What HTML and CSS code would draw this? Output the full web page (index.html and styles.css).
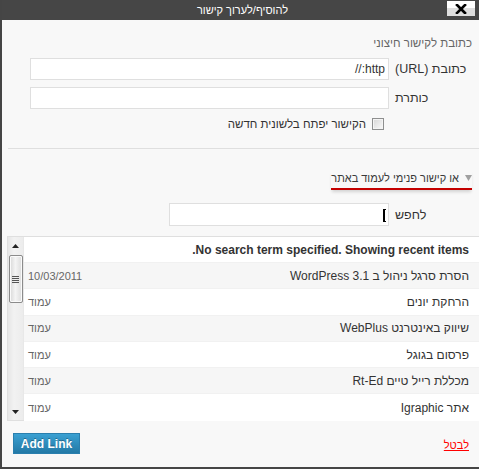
FILE: index.html
```html
<!DOCTYPE html>
<html lang="he">
<head>
<meta charset="utf-8">
<title>להוסיף/לערוך קישור</title>
<link rel="stylesheet" href="styles.css">
</head>
<body>
<div class="dialog" dir="rtl">
  <div class="titlebar">
    <span class="title">להוסיף/לערוך קישור</span>
    <button class="close" type="button" aria-label="close">
      <svg width="12" height="10" viewBox="0 0 12 10"><path d="M2 1 L10 9 M10 1 L2 9" stroke="#000" stroke-width="2.6" stroke-linecap="square"/></svg>
    </button>
  </div>
  <div class="content">
    <section class="external">
      <p class="section-head">כתובת לקישור חיצוני</p>
      <div class="field">
        <label class="field-label">כתובת (URL)</label>
        <input class="text-input" type="text" value="http://">
      </div>
      <div class="field">
        <label class="field-label">כותרת</label>
        <input class="text-input" type="text" value="">
      </div>
      <div class="check-row">
        <span class="checkbox"></span>
        <span class="check-label">הקישור יפתח בלשונית חדשה</span>
      </div>
    </section>

    <section class="internal">
      <p class="toggle"><svg class="arrow" width="7" height="6" viewBox="0 0 7 6"><polygon points="0,0 7,0 3.5,6" fill="#a0a0a0"/></svg><span class="toggle-text">או קישור פנימי לעמוד באתר</span></p>
      <div class="search-row">
        <label class="field-label">לחפש</label>
        <span class="search-wrap"><input class="search-input" type="text" value=""><span class="caret"></span></span>
      </div>
      <div class="results">
        <ul class="list">
          <li class="row head"><span class="item-title">No search term specified. Showing recent items.</span></li>
          <li class="row alt"><span class="item-title">הסרת סרגל ניהול ב WordPress 3.1</span><span class="item-info">10/03/2011</span></li>
          <li class="row"><span class="item-title">הרחקת יונים</span><span class="item-info">עמוד</span></li>
          <li class="row alt"><span class="item-title">שיווק באינטרנט WebPlus</span><span class="item-info">עמוד</span></li>
          <li class="row"><span class="item-title">פרסום בגוגל</span><span class="item-info">עמוד</span></li>
          <li class="row alt"><span class="item-title">מכללת רייל טיים Rt-Ed</span><span class="item-info">עמוד</span></li>
          <li class="row last"><span class="item-title">אתר Igraphic</span><span class="item-info">עמוד</span></li>
        </ul>
        <div class="scrollbar">
          <span class="sb-btn"><svg width="7" height="4" viewBox="0 0 7 4"><polygon points="0,4 7,4 3.5,0" fill="#222"/></svg></span>
          <span class="sb-thumb"><span class="grip"></span><span class="grip"></span><span class="grip"></span><span class="grip"></span></span>
          <span class="sb-track"></span>
          <span class="sb-btn"><svg width="7" height="4" viewBox="0 0 7 4"><polygon points="0,0 7,0 3.5,4" fill="#222"/></svg></span>
        </div>
      </div>
    </section>

    <div class="footer">
      <a class="cancel" href="#">לבטל</a>
      <button class="add-link" type="button">Add Link</button>
    </div>
  </div>
</div>
</body>
</html>
```

FILE: styles.css
```css
* {
  box-sizing: border-box;
}

html, body {
  margin: 0;
  padding: 0;
}

body {
  width: 479px;
  height: 469px;
  overflow: hidden;
  background: #454545;
  font-family: "Liberation Sans", Arial, "DejaVu Sans", sans-serif;
  color: #333;
}

.dialog {
  margin-left: 2px;
  width: 477px;
  height: 467px;
  background: #f8f8f8;
  overflow: hidden;
  display: flex;
  flex-direction: column;
}

/* title bar */
.titlebar {
  position: relative;
  height: 20px;
  flex: 0 0 20px;
  background: #464646;
  display: flex;
  align-items: center;
  justify-content: center;
}

.title {
  color: #fff;
  font-size: 11px;
  line-height: 14px;
  padding-left: 4px;
}

.close {
  position: absolute;
  top: 1px;
  right: 4px;
  width: 28px;
  height: 15px;
  padding: 0;
  border: 0;
  background: linear-gradient(#fff 0, #fff 50%, #dedede 50%, #dedede 100%);
  display: flex;
  align-items: center;
  justify-content: center;
}

.close svg {
  display: block;
}

/* content */
.content {
  flex: 1;
  padding: 0 7px 0 6px;
  display: flex;
  flex-direction: column;
}

.external {
  margin-right: -7px;
  padding-right: 7px;
  padding-bottom: 18px;
  border-bottom: 1px solid #dfdfdf;
}

.section-head {
  margin: 15px 0 0;
  font-size: 11.5px;
  line-height: 16px;
  color: #666;
}

.field {
  display: flex;
  align-items: center;
  margin-top: 7px;
}

.field-label {
  flex: 0 0 83px;
  padding-left: 6px;
  text-align: left;
  font-size: 12.5px;
  color: #333;
}

.text-input {
  width: 359px;
  height: 22px;
  margin: 0;
  padding: 0 3px;
  border: 1px solid #dfdfdf;
  background: #fff;
  font-family: "Liberation Sans", Arial, sans-serif;
  font-size: 12px;
  color: #333;
  outline: none;
}

.check-row {
  display: flex;
  align-items: center;
  margin-top: 8px;
  padding-right: 88px;
  height: 13px;
}

.checkbox {
  width: 12px;
  height: 12px;
  flex: 0 0 12px;
  border: 1px solid #8e8f8f;
  background: linear-gradient(135deg, #d6d6d6, #fafafa);
  box-shadow: inset 0 0 0 1px #f4f4f4;
}

.check-label {
  margin-right: 6px;
  font-size: 11.5px;
  color: #333;
}

/* internal links */
.internal {
  display: flex;
  flex-direction: column;
}

.toggle {
  margin: 21px 0 0;
  align-self: flex-start;
  display: flex;
  align-items: center;
  font-size: 11px;
  line-height: 16px;
  color: #3a3a3a;
  padding-bottom: 2px;
  border-bottom: 2px solid #c40000;
  box-shadow: 0 3px 3px -1px rgba(0, 0, 0, 0.15);
}

.arrow {
  display: block;
  margin-left: 6px;
}

.search-row {
  display: flex;
  align-items: center;
  margin-top: 13px;
}

.search-wrap {
  position: relative;
  display: block;
  width: 220px;
  height: 23px;
}

.search-input {
  display: block;
  width: 220px;
  height: 23px;
  margin: 0;
  border: 1px solid #dfdfdf;
  background: #fff;
  outline: none;
}

.caret {
  position: absolute;
  top: 6px;
  right: 3px;
  width: 3px;
  height: 13px;
  border-left: 2px solid #000;
  border-top: 1px solid #000;
  border-bottom: 1px solid #000;
}

.results {
  margin-top: 10px;
  margin-left: -1px;
  margin-right: -8px;
  height: 185px;
  border: 1px solid #dfdfdf;
  background: #fff;
  display: flex;
}

.list {
  flex: 1;
  margin: 0;
  padding: 0;
  list-style: none;
}

.row {
  display: flex;
  align-items: center;
  justify-content: space-between;
  height: 26.3px;
  padding: 0 10px 0 4px;
  border-bottom: 1px solid #f1f1f1;
  font-size: 12px;
  color: #333;
  background: #fff;
}

.row.head {
  height: 26px;
  font-weight: bold;
  font-size: 12px;
}

.row.alt {
  background: #f6f6f6;
}

.row.last {
  border-bottom: 0;
}

.item-info {
  font-size: 11px;
  color: #666;
}

.scrollbar {
  flex: 0 0 16px;
  width: 16px;
  display: flex;
  flex-direction: column;
  align-items: center;
  background: linear-gradient(90deg, #e6e6e6, #f2f2f2 40%, #ececec);
  border-right: 1px solid #e8e8e8;
}

.sb-btn {
  height: 17px;
  flex: 0 0 17px;
  display: flex;
  align-items: center;
  justify-content: center;
}

.sb-thumb {
  margin-top: 1px;
  width: 14px;
  height: 48px;
  flex: 0 0 48px;
  border: 1px solid #8b8b8b;
  border-radius: 2px;
  background: linear-gradient(90deg, #d8d8d8, #f4f4f4 45%, #dcdcdc);
  box-shadow: inset 0 0 0 1px #fafafa;
  display: flex;
  flex-direction: column;
  align-items: center;
  justify-content: center;
  gap: 1px;
}

.grip {
  display: block;
  width: 7px;
  height: 1px;
  background: #555;
}

.sb-track {
  flex: 1;
}

/* footer */
.footer {
  margin-top: 12px;
  display: flex;
  align-items: center;
  justify-content: space-between;
}

.cancel {
  margin-right: 3px;
  font-size: 11px;
  color: #ff0000;
  text-decoration: underline;
  padding-top: 2px;
}

.add-link {
  margin-left: 5px;
  width: 67px;
  height: 21px;
  padding: 0;
  border: 1px solid #2a7fae;
  background: linear-gradient(#3aa0d2, #2379a6);
  color: #fff;
  font-family: "Liberation Sans", Arial, sans-serif;
  font-weight: bold;
  font-size: 12px;
  text-shadow: 0 -1px 0 rgba(0, 0, 0, 0.3);
}
```
